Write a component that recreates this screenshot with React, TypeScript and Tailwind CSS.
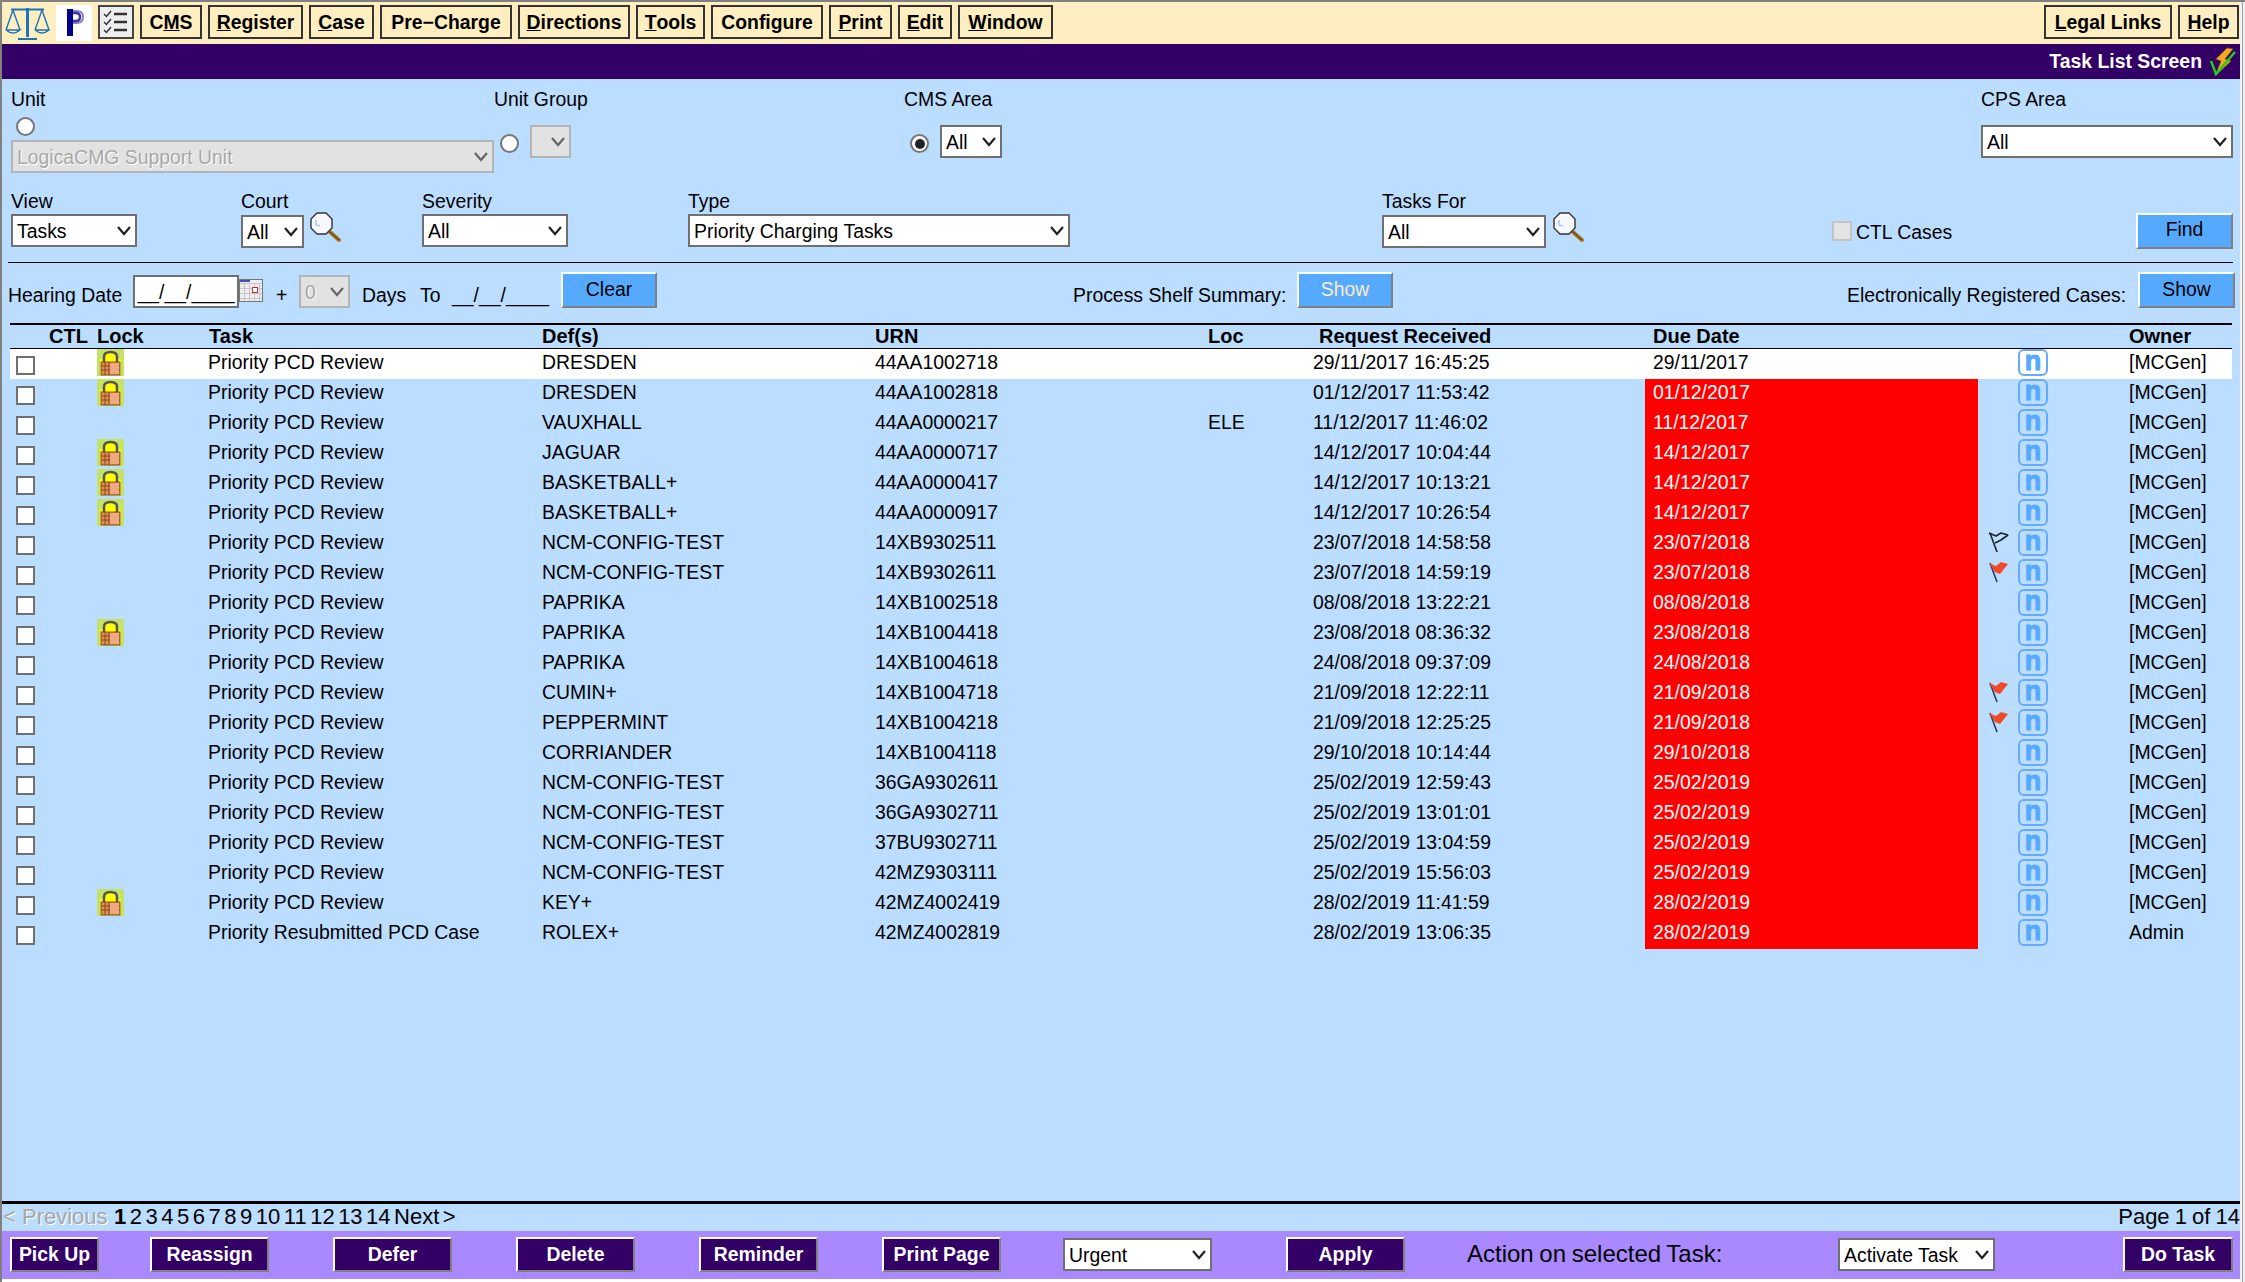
import React from 'react';

interface TaskRow {
  task: string;
  def: string;
  urn: string;
  loc?: string;
  received: string;
  due: string;
  owner: string;
  lock?: boolean;
  flag?: 'black' | 'red';
}

const pcd = 'Priority PCD Review';
const mc = '[MCGen]';

const rows: TaskRow[] = [
  { task: pcd, def: 'DRESDEN', urn: '44AA1002718', received: '29/11/2017 16:45:25', due: '29/11/2017', owner: mc, lock: true },
  { task: pcd, def: 'DRESDEN', urn: '44AA1002818', received: '01/12/2017 11:53:42', due: '01/12/2017', owner: mc, lock: true },
  { task: pcd, def: 'VAUXHALL', urn: '44AA0000217', loc: 'ELE', received: '11/12/2017 11:46:02', due: '11/12/2017', owner: mc },
  { task: pcd, def: 'JAGUAR', urn: '44AA0000717', received: '14/12/2017 10:04:44', due: '14/12/2017', owner: mc, lock: true },
  { task: pcd, def: 'BASKETBALL+', urn: '44AA0000417', received: '14/12/2017 10:13:21', due: '14/12/2017', owner: mc, lock: true },
  { task: pcd, def: 'BASKETBALL+', urn: '44AA0000917', received: '14/12/2017 10:26:54', due: '14/12/2017', owner: mc, lock: true },
  { task: pcd, def: 'NCM-CONFIG-TEST', urn: '14XB9302511', received: '23/07/2018 14:58:58', due: '23/07/2018', owner: mc, flag: 'black' },
  { task: pcd, def: 'NCM-CONFIG-TEST', urn: '14XB9302611', received: '23/07/2018 14:59:19', due: '23/07/2018', owner: mc, flag: 'red' },
  { task: pcd, def: 'PAPRIKA', urn: '14XB1002518', received: '08/08/2018 13:22:21', due: '08/08/2018', owner: mc },
  { task: pcd, def: 'PAPRIKA', urn: '14XB1004418', received: '23/08/2018 08:36:32', due: '23/08/2018', owner: mc, lock: true },
  { task: pcd, def: 'PAPRIKA', urn: '14XB1004618', received: '24/08/2018 09:37:09', due: '24/08/2018', owner: mc },
  { task: pcd, def: 'CUMIN+', urn: '14XB1004718', received: '21/09/2018 12:22:11', due: '21/09/2018', owner: mc, flag: 'red' },
  { task: pcd, def: 'PEPPERMINT', urn: '14XB1004218', received: '21/09/2018 12:25:25', due: '21/09/2018', owner: mc, flag: 'red' },
  { task: pcd, def: 'CORRIANDER', urn: '14XB1004118', received: '29/10/2018 10:14:44', due: '29/10/2018', owner: mc },
  { task: pcd, def: 'NCM-CONFIG-TEST', urn: '36GA9302611', received: '25/02/2019 12:59:43', due: '25/02/2019', owner: mc },
  { task: pcd, def: 'NCM-CONFIG-TEST', urn: '36GA9302711', received: '25/02/2019 13:01:01', due: '25/02/2019', owner: mc },
  { task: pcd, def: 'NCM-CONFIG-TEST', urn: '37BU9302711', received: '25/02/2019 13:04:59', due: '25/02/2019', owner: mc },
  { task: pcd, def: 'NCM-CONFIG-TEST', urn: '42MZ9303111', received: '25/02/2019 15:56:03', due: '25/02/2019', owner: mc },
  { task: pcd, def: 'KEY+', urn: '42MZ4002419', received: '28/02/2019 11:41:59', due: '28/02/2019', owner: mc, lock: true },
  { task: 'Priority Resubmitted PCD Case', def: 'ROLEX+', urn: '42MZ4002819', received: '28/02/2019 13:06:35', due: '28/02/2019', owner: 'Admin' },
];

const gridCols = 'grid grid-cols-[39px_48px_112px_333px_333px_333px_105px_332px_333px_40px_111px_103px]';

const Scales = () => (
  <svg width="45" height="34" viewBox="0 0 45 34" fill="none" stroke="#1b74bb" strokeWidth="1.4" className="shrink-0">
    <path d="M6 3.500H39" strokeWidth="2" />
    <path d="M22.500 2V31" strokeWidth="3" />
    <path d="M13 33H32" strokeWidth="2" />
    <path d="M8 4L1 24M8 4L15 24M1 24Q8 30 15 24H1" />
    <path d="M37 4L30 24M37 4L44 24M30 24Q37 30 44 24H30" />
  </svg>
);

const PLogo = () => (
  <svg width="36" height="36" viewBox="0 0 36 36" className="shrink-0 bg-white">
    <path d="M17 6H21Q27 6 27 12Q27 18 21 18H17" fill="none" stroke="#8a80c8" strokeWidth="2" />
    <path d="M17 8H20Q24 8 24 12Q24 16 20 16H17" fill="none" stroke="#3c34a0" strokeWidth="2.500" />
    <rect x="11" y="4" width="6" height="27" fill="#00008b" />
  </svg>
);

const Checklist = () => (
  <div className="w-[36px] h-[34px] shrink-0 border-2 border-[#444] bg-[#eeeeee] flex items-center justify-center">
    <svg width="26" height="26" viewBox="0 0 26 26" fill="none" stroke="#333" strokeWidth="2">
      <path d="M1 5L3.500 7.500L8 2M1 13L3.500 15.500L8 10M1 21L3.500 23.500L8 18" strokeWidth="1.500" />
      <path d="M11 5H24M11 13H24M11 21H24" strokeWidth="2.500" />
    </svg>
  </div>
);

const Magnifier = () => (
  <svg width="31" height="30" viewBox="0 0 31 30" fill="none" className="shrink-0">
    <path d="M20 20L29 28" stroke="#a8781c" strokeWidth="4" strokeLinecap="round" />
    <path d="M20 20L29 28" stroke="#333" strokeWidth="1" />
    <path d="M7 1H16L22 7V16L16 22H7L1 16V7Z" fill="#f8f8ff" stroke="#333" strokeWidth="1.400" />
    <path d="M6 8V13L10 14" stroke="#a8c8f0" strokeWidth="1.600" />
  </svg>
);

const Calendar = () => (
  <svg width="24" height="23" viewBox="0 0 24 23" className="shrink-0 mt-[7px]">
    <rect x="0.500" y="0.500" width="23" height="22" fill="#eeeeee" stroke="#777" />
    <rect x="1" y="1" width="10" height="2" fill="#4a50b0" />
    <path d="M1 4.500H23M1 9.500H23M1 14.500H23M1 19.500H23M5.500 4V22M10.500 4V22M15.500 4V22M20.500 4V22" stroke="#c4c4cc" />
    <rect x="13.500" y="8.500" width="5" height="5" fill="#fff" stroke="#c03030" />
  </svg>
);

const Bolt = () => (
  <svg width="27" height="30" viewBox="0 0 27 30" className="shrink-0">
    <path d="M18 1L7 12L12 14L6 29L22 14L16 12L24 2Z" fill="#f5a623" stroke="#8a5a10" strokeWidth="0.800" />
    <path d="M2 14L7 27L26 5" fill="none" stroke="#20d020" strokeWidth="2.400" />
  </svg>
);

const Lock = () => (
  <div className="w-[27px] h-[27px] bg-[#c4e268] flex items-center justify-center">
    <svg width="23" height="26" viewBox="0 0 23 26">
      <rect x="1" y="9" width="21" height="16" fill="#ffff00" />
      <path d="M5 12V7Q5 2 11.500 2Q18 2 18 7V12" fill="#ffff00" stroke="#555" strokeWidth="2.500" />
      <rect x="2" y="12" width="19" height="13" fill="#e88a50" stroke="#6a4020" strokeWidth="0.800" />
      <path d="M2 16H21M2 20H21M6 12V25M10 12V25" stroke="#6a4020" strokeWidth="0.800" />
      <rect x="11" y="13" width="9" height="11" fill="#f0a880" />
    </svg>
  </div>
);

const Flag = ({ color }: { color: 'black' | 'red' }) => (
  <svg width="22" height="22" viewBox="0 0 22 22" fill="none" className="mt-[2px] ml-[9px]">
    <path d="M3 2L10 21" stroke={color === 'red' ? '#2a3a70' : '#222'} strokeWidth="1.600" />
    {color === 'red' ? (
      <path d="M2 2L9 5L14 1L21 3L17 8L13 13L8 11Z" fill="#f04a24" />
    ) : (
      <path d="M2 2L9 5L14 2L21 4L14 9L8 12" stroke="#222" strokeWidth="1.600" strokeLinejoin="bevel" />
    )}
  </svg>
);

const Chevron = () => (
  <svg width="14" height="10" viewBox="0 0 14 10" fill="none" className="shrink-0">
    <path d="M1 1L7 8L13 1" stroke="currentColor" strokeWidth="2.200" />
  </svg>
);

const Select = ({ value, className, disabled }: { value?: string; className: string; disabled?: boolean }) => (
  <div
    className={`h-[33px] shrink-0 border-2 flex items-center justify-between pl-[4px] pr-[4px] leading-[22px] ${
      disabled ? 'border-[#b4b4b4] bg-[#e2e2e2] text-[#a8a8a8] [text-shadow:1px_1px_0_#fff]' : 'border-[#707070] bg-white text-black'
    } ${className}`}
  >
    <span className="whitespace-nowrap">{value}</span>
    <span className={disabled ? 'text-[#666]' : 'text-[#222]'}>
      <Chevron />
    </span>
  </div>
);

const Radio = ({ checked, className }: { checked?: boolean; className?: string }) => (
  <div className={`w-[19px] h-[19px] rounded-full border-2 border-[#777] bg-white flex items-center justify-center shrink-0 ${className ?? ''}`}>
    {checked && <div className="w-[10px] h-[10px] rounded-full bg-[#222]" />}
  </div>
);

const MenuItem = ({ u, rest, pre, className }: { u: string; rest: string; pre?: string; className: string }) => (
  <div className={`h-[34px] shrink-0 border-2 border-[#333] flex items-center justify-center pt-[2px] font-bold ${className}`}>
    {pre}
    <u>{u}</u>
    {rest}
  </div>
);

const BlueButton = ({ label, className, disabled }: { label: string; className: string; disabled?: boolean }) => (
  <div
    className={`h-[36px] shrink-0 bg-[#55aaff] border-2 border-t-white border-l-white border-r-[#808080] border-b-[#808080] flex items-center justify-center pb-[3px] ${
      disabled ? 'text-[#e8f2ff] [text-shadow:1px_1px_0_#8899aa]' : 'text-black'
    } ${className}`}
  >
    {label}
  </div>
);

const PurpleButton = ({ label, className }: { label: string; className: string }) => (
  <div
    className={`h-[35px] shrink-0 bg-[#330066] border-2 border-t-white border-l-white border-r-[#808080] border-b-[#808080] text-white font-bold flex items-center justify-center ${className}`}
  >
    {label}
  </div>
);

const Row = ({ row, index }: { row: TaskRow; index: number }) => (
  <div className={`${gridCols} h-[30px] leading-[26px] ${index === 0 ? 'bg-white' : ''}`}>
    <div className="pl-[6px] pt-[7px]">
      <div className="w-[19px] h-[19px] border-2 border-[#707070] bg-white" />
    </div>
    <div />
    <div>{row.lock && <Lock />}</div>
    <div className="whitespace-nowrap -ml-px">{row.task}</div>
    <div>{row.def}</div>
    <div>{row.urn}</div>
    <div>{row.loc}</div>
    <div>{row.received}</div>
    <div className={`pl-[8px] ${index === 0 ? '' : 'bg-[#ff0000] text-white'}`}>{row.due}</div>
    <div>{row.flag && <Flag color={row.flag} />}</div>
    <div>
      <div className="w-[30px] h-[27px] border-2 border-[#66aaff] rounded-[6px] flex items-center justify-center font-bold text-[#55aaff] text-[27px] leading-[22px] pb-[3px] [-webkit-text-stroke:1px_#55aaff]">
        n
      </div>
    </div>
    <div>{row.owner}</div>
  </div>
);

export default function App() {
  return (
    <div className="w-[2245px] h-[1282px] overflow-hidden bg-[#f2f2f2] border-t-2 border-l-2 border-t-[#808080] border-l-[#808080] flex text-[19.4px] text-black [font-family:'Liberation_Sans',Arial,sans-serif]">
      <div className="w-[2238px] shrink-0 flex flex-col">
        {/* top menu */}
        <div className="h-[42px] shrink-0 bg-[#ffeebf] flex items-start pt-[3px] pl-[3px] gap-[6px]">
          <div className="pt-[1px]">
            <Scales />
          </div>
          <PLogo />
          <Checklist />
          <MenuItem pre="C" u="M" rest="S" className="w-[62px]" />
          <MenuItem u="R" rest="egister" className="w-[95px]" />
          <MenuItem u="C" rest="ase" className="w-[65px]" />
          <MenuItem u="" rest="Pre−Charge" className="w-[132px]" />
          <MenuItem u="D" rest="irections" className="w-[112px]" />
          <MenuItem u="T" rest="ools" className="w-[69px]" />
          <MenuItem u="" rest="Configure" className="w-[112px]" />
          <MenuItem u="P" rest="rint" className="w-[63px]" />
          <MenuItem u="E" rest="dit" className="w-[54px]" />
          <MenuItem u="W" rest="indow" className="w-[95px]" />
          <MenuItem u="L" rest="egal Links" className="w-[128px] ml-auto" />
          <MenuItem u="H" rest="elp" className="w-[61px] mr-[1px]" />
        </div>

        {/* title bar */}
        <div className="h-[35px] shrink-0 bg-[#330066] flex items-center justify-end pr-[4px] gap-[7px] text-white font-bold">
          <span>Task List Screen</span>
          <Bolt />
        </div>

        <div className="flex-1 min-h-0 bg-[#bbddff] flex flex-col">
          {/* filters, first row */}
          <div className="h-[111px] shrink-0 flex pl-[9px]">
            <div className="w-[483px] pt-[9px]">
              <div className="leading-[22px]">Unit</div>
              <Radio className="mt-[7px] ml-[5px]" />
              <Select value="LogicaCMG Support Unit" disabled className="w-[483px] mt-[4px]" />
            </div>
            <div className="w-[410px] pt-[9px]">
              <div className="leading-[22px]">Unit Group</div>
              <div className="flex mt-[15px] pl-[6px]">
                <Radio className="mt-[9px]" />
                <Select disabled className="w-[41px] ml-[11px]" />
              </div>
            </div>
            <div className="w-[1077px] pt-[9px]">
              <div className="leading-[22px]">CMS Area</div>
              <div className="flex mt-[15px] pl-[6px]">
                <Radio checked className="mt-[9px]" />
                <Select value="All" className="w-[62px] ml-[11px]" />
              </div>
            </div>
            <div className="w-[252px] pt-[9px]">
              <div className="leading-[22px]">CPS Area</div>
              <Select value="All" className="w-[252px] mt-[15px]" />
            </div>
          </div>

          {/* filters, second row */}
          <div className="h-[72px] shrink-0 flex pl-[9px]">
            <div className="w-[230px]">
              <div className="leading-[22px]">View</div>
              <Select value="Tasks" className="w-[126px] mt-[2px]" />
            </div>
            <div className="w-[181px]">
              <div className="leading-[22px]">Court</div>
              <div className="flex items-start gap-[6px] mt-[3px]">
                <Select value="All" className="w-[63px]" />
                <div className="-mt-[3px]">
                  <Magnifier />
                </div>
              </div>
            </div>
            <div className="w-[266px]">
              <div className="leading-[22px]">Severity</div>
              <Select value="All" className="w-[146px] mt-[2px]" />
            </div>
            <div className="w-[694px]">
              <div className="leading-[22px]">Type</div>
              <Select value="Priority Charging Tasks" className="w-[382px] mt-[2px]" />
            </div>
            <div className="w-[450px]">
              <div className="leading-[22px]">Tasks For</div>
              <div className="flex items-start gap-[7px] mt-[3px]">
                <Select value="All" className="w-[164px]" />
                <div className="-mt-[3px]">
                  <Magnifier />
                </div>
              </div>
            </div>
            <div className="w-[304px] flex items-start pt-[31px] gap-[4px]">
              <div className="w-[20px] h-[20px] border-2 border-[#c4c4c4] bg-[#e4e4e4]" />
              <span className="leading-[22px]">CTL Cases</span>
            </div>
            <BlueButton label="Find" className="w-[97px] mt-[23px]" />
          </div>

          <div className="h-px shrink-0 bg-black ml-[6px] w-[2225px]" />

          {/* hearing date row */}
          <div className="h-[60px] shrink-0 flex items-start pt-[9px] pl-[6px] leading-[22px]">
            <span className="w-[125px] mt-[12px] whitespace-nowrap">Hearing Date</span>
            <div className="w-[106px] h-[33px] mt-[3px] border-2 border-[#707070] bg-white flex items-center justify-center shrink-0">__/__/____</div>
            <Calendar />
            <span className="w-[23px] ml-[13px] mt-[12px]">+</span>
            <Select value="0" disabled className="w-[51px] mt-[3px]" />
            <span className="w-[58px] ml-[12px] mt-[12px]">Days</span>
            <span className="w-[32px] mt-[12px]">To</span>
            <span className="w-[109px] mt-[12px]">__/__/____</span>
            <BlueButton label="Clear" className="w-[96px]" />
            <span className="w-[224px] ml-[416px] mt-[12px] whitespace-nowrap">Process Shelf Summary:</span>
            <BlueButton label="Show" disabled className="w-[96px]" />
            <span className="w-[291px] ml-[454px] mt-[12px] whitespace-nowrap">Electronically Registered Cases:</span>
            <BlueButton label="Show" className="w-[97px]" />
          </div>

          {/* task table */}
          <div className="ml-[8px] w-[2222px] shrink-0">
            <div className={`${gridCols} h-[26px] border-t-2 border-b border-black font-bold text-[20px] leading-[22px]`}>
              <div />
              <div>CTL</div>
              <div>Lock</div>
              <div>Task</div>
              <div>Def(s)</div>
              <div>URN</div>
              <div>Loc</div>
              <div className="pl-[6px]">Request Received</div>
              <div className="pl-[8px]">Due Date</div>
              <div />
              <div />
              <div>Owner</div>
            </div>
            {rows.map((row, i) => (
              <Row key={row.urn} row={row} index={i} />
            ))}
          </div>

          <div className="flex-1" />

          {/* pagination */}
          <div className="h-[3px] shrink-0 bg-black" />
          <div className="h-[27px] shrink-0 flex justify-between pl-[1px] text-[22px] leading-[26px]">
            <div className="whitespace-nowrap [word-spacing:-2.6px]">
              <span className="text-[#a8a8a8] [text-shadow:1px_1px_0_#fff] [word-spacing:0] mr-[3px]">&lt; Previous</span> <b>1</b> 2 3 4 5 6 7 8 9 10 11 12 13 14 Next &gt;
            </div>
            <div className="[word-spacing:-1px]">Page 1 of 14</div>
          </div>

          {/* action bar */}
          <div className="h-[48px] shrink-0 bg-[#aa88ff] flex items-start pt-[6px] pl-[8px]">
            <PurpleButton label="Pick Up" className="w-[89px]" />
            <PurpleButton label="Reassign" className="w-[119px] ml-[51px]" />
            <PurpleButton label="Defer" className="w-[119px] ml-[64px]" />
            <PurpleButton label="Delete" className="w-[119px] ml-[64px]" />
            <PurpleButton label="Reminder" className="w-[119px] ml-[64px]" />
            <PurpleButton label="Print Page" className="w-[119px] ml-[64px]" />
            <Select value="Urgent" className="w-[149px] ml-[62px] mt-px" />
            <PurpleButton label="Apply" className="w-[119px] ml-[74px]" />
            <span className="ml-[62px] mt-[4px] text-[24px] leading-[26px] whitespace-nowrap w-[371px] [word-spacing:-1px]">Action on selected Task:</span>
            <Select value="Activate Task" className="w-[157px] mt-px" />
            <PurpleButton label="Do Task" className="w-[110px] ml-[128px]" />
          </div>
          <div className="h-[3px] shrink-0 bg-white" />
        </div>
      </div>
      <div className="w-px ml-[2px] bg-[#a0a0a0]" />
    </div>
  );
}
